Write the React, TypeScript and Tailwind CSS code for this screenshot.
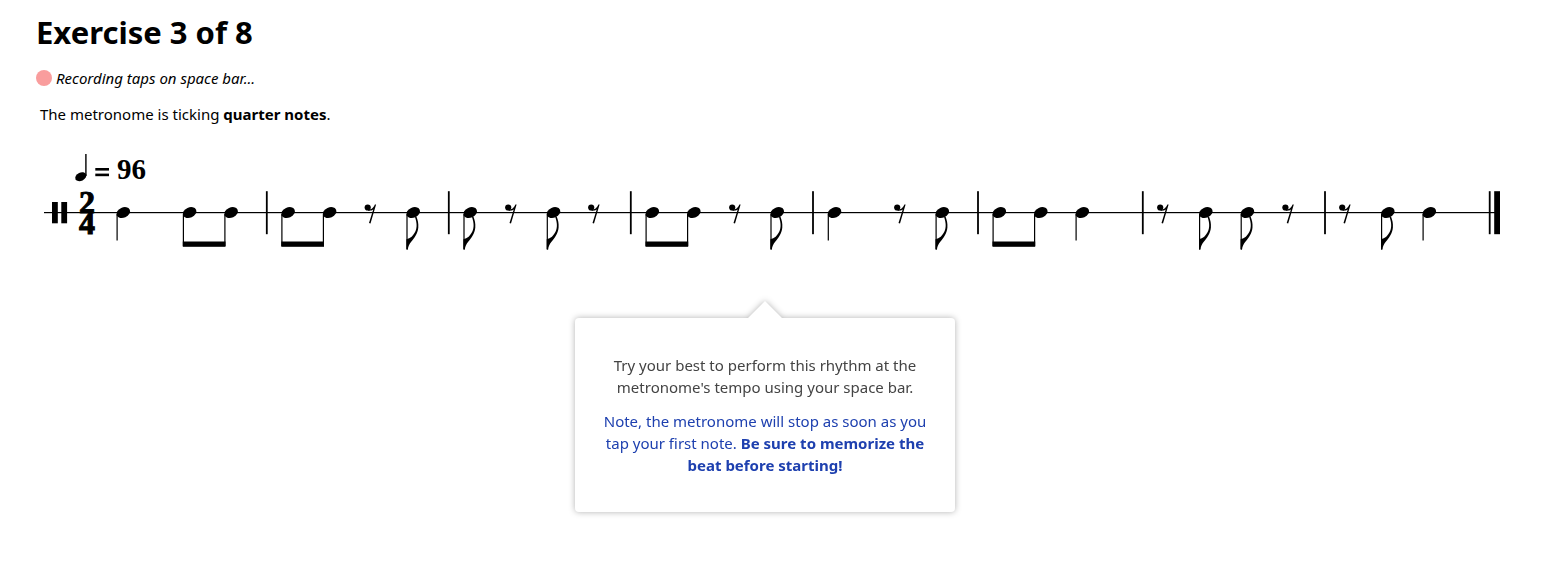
type Kind = 'quarter' | 'eighth' | 'beamed' | 'rest'

type Symbol = {
  kind: Kind
  x: number
}

// x is the centre of a notehead, the left edge of a rest
// and the left notehead of a beamed pair
const measures: Symbol[][] = [
  [
    { kind: 'quarter', x: 93.3 },
    { kind: 'beamed', x: 159.6 },
  ],
  [
    { kind: 'beamed', x: 258.1 },
    { kind: 'rest', x: 334.5 },
    { kind: 'eighth', x: 383.2 },
  ],
  [
    { kind: 'eighth', x: 440.2 },
    { kind: 'rest', x: 475 },
    { kind: 'eighth', x: 523.5 },
    { kind: 'rest', x: 558 },
  ],
  [
    { kind: 'beamed', x: 622.3 },
    { kind: 'rest', x: 699 },
    { kind: 'eighth', x: 747.2 },
  ],
  [
    { kind: 'quarter', x: 804.5 },
    { kind: 'rest', x: 864 },
    { kind: 'eighth', x: 912.3 },
  ],
  [
    { kind: 'beamed', x: 969.3 },
    { kind: 'quarter', x: 1052.3 },
  ],
  [
    { kind: 'rest', x: 1127 },
    { kind: 'eighth', x: 1175.8 },
    { kind: 'eighth', x: 1217.4 },
    { kind: 'rest', x: 1252.2 },
  ],
  [
    { kind: 'rest', x: 1309 },
    { kind: 'eighth', x: 1357.8 },
    { kind: 'quarter', x: 1399.3 },
  ],
]

const barlines = [236.8, 418.8, 600.8, 783, 948, 1112.8, 1295]

function Head({ x }: { x: number }) {
  return <ellipse transform={`translate(${x} 62.6) rotate(-24)`} rx={7.1} ry={5.1} />
}

function Stem({ x, bottom }: { x: number; bottom: number }) {
  return <rect x={x - 6.8} y={64} width={1.2} height={bottom - 64} />
}

function Note({ kind, x }: Symbol) {
  if (kind === 'rest') {
    return (
      <g transform={`translate(${x} 54)`}>
        <circle cx={3.2} cy={3.5} r={3.1} />
        <path d="M3.2 6.6C3.6 5.4 5 5.6 5.8 5.2C8 4.6 9.3 2.8 10.4 0.4L11.6 0.4L6 19.4L4.5 19.1L8.7 5.6C7.2 6.8 5.2 7 3.2 6.6Z" />
      </g>
    )
  }

  if (kind === 'beamed') {
    return (
      <g>
        <Head x={x} />
        <Head x={x + 41.5} />
        <Stem x={x} bottom={96} />
        <Stem x={x + 41.5} bottom={96} />
        <rect x={x - 6.8} y={91.5} width={42.7} height={5.3} />
      </g>
    )
  }

  return (
    <g>
      <Head x={x} />
      <Stem x={x} bottom={kind === 'eighth' ? 99 : 90.5} />
      {kind === 'eighth' && (
        <path
          transform={`translate(${x - 6.8} 64)`}
          d="M10 2.5C11.4 6 12.2 9.5 11.9 13.5C11.4 19.5 7.8 24 5 27.6C3 30 1.8 32.5 1.4 35.8H0V25.2C4 24.8 7 21.4 8.8 17.8C10.8 13.4 10.6 9 8.6 3Z"
        />
      )}
    </g>
  )
}

function Score() {
  return (
    <svg
      viewBox="0 0 1470 110"
      className="block w-full"
      role="img"
      aria-label="Rhythm in 2/4"
    >
      {/* Tempo mark */}
      <ellipse transform="translate(50.8 26.7) rotate(-25)" rx={5.8} ry={4.1} />
      <rect x={55.2} y={4} width={1.4} height={22} />
      <rect x={65.3} y={18} width={13.7} height={2.6} />
      <rect x={65.3} y={23.6} width={13.7} height={2.6} />
      <text x={87} y={29} className="font-['Liberation_Serif'] text-[29px] font-bold">
        96
      </text>

      {/* Staff line, clef and time signature */}
      <rect x={14} y={62} width={1456} height={1.2} />
      <rect x={22} y={52} width={5.8} height={21.3} />
      <rect x={31.3} y={52} width={5.8} height={21.3} />
      <g
        className="font-['Liberation_Serif'] text-[32px] font-bold"
        textAnchor="middle"
        stroke="black"
        strokeWidth={1}
      >
        <text x={57} y={63}>
          2
        </text>
        <text x={57} y={84}>
          4
        </text>
      </g>

      {measures.flat().map((s) => (
        <Note key={s.x} kind={s.kind} x={s.x} />
      ))}

      {barlines.map((x) => (
        <rect key={x} x={x - 0.9} y={41.2} width={1.8} height={43} />
      ))}

      {/* Final barline */}
      <rect x={1458.8} y={41.2} width={1.8} height={43} />
      <rect x={1464.2} y={41.2} width={5.8} height={43} />
    </svg>
  )
}

function Hint() {
  return (
    <div className="relative mx-auto mt-[58px] w-[380px] max-w-full drop-shadow-[0_0_3px_rgba(0,0,0,0.3)]">
      <div className="absolute -top-3 left-1/2 size-6 -translate-x-1/2 rotate-45 bg-white" />
      <div className="relative flex flex-col gap-3 rounded bg-white px-6 py-9 text-center text-[15px] leading-[22px]">
        <p className="text-[#444444]">
          Try your best to perform this rhythm at the metronome's tempo using your space bar.
        </p>
        <p className="text-[#1e40af]">
          Note, the metronome will stop as soon as you tap your first note.{' '}
          <strong>Be sure to memorize the beat before starting!</strong>
        </p>
      </div>
    </div>
  )
}

export default function App() {
  return (
    <main className="bg-white pt-3 pr-[50px] pb-14 pl-[30px] font-['Noto_Sans',sans-serif] text-[15px] text-black">
      <div className="pl-1.5">
        <h1 className="text-[31px] leading-10 font-bold">Exercise 3 of 8</h1>

        <div className="mt-4 flex items-center gap-1 leading-5">
          <span className="size-4 rounded-full bg-[#f99d9d]" />
          <em>Recording taps on space bar...</em>
        </div>

        <p className="mt-4 pl-1 leading-5">
          The metronome is ticking <strong>quarter notes</strong>.
        </p>
      </div>

      <div className="mt-[26px]">
        <Score />
      </div>

      <Hint />
    </main>
  )
}
